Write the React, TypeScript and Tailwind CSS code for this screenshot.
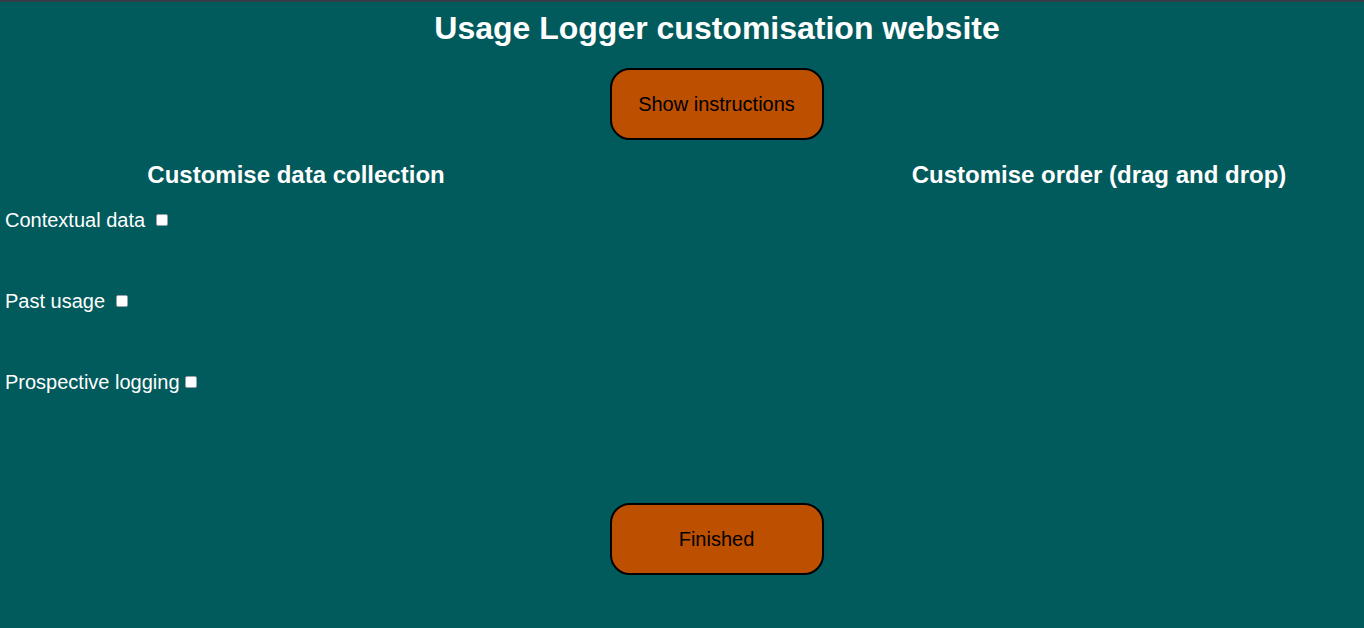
import React from "react";

const options = [
  { label: "Contextual data", gap: true },
  { label: "Past usage", gap: true },
  { label: "Prospective logging", gap: false },
];

function ActionButton({ children }: { children: React.ReactNode }) {
  return (
    <button className="flex h-[72px] w-[214px] items-center justify-center rounded-[20px] border-2 border-black bg-[#bd4f00] text-[20px] text-black">
      {children}
    </button>
  );
}

export default function App() {
  return (
    <div className="min-h-screen w-full border-t-2 border-[#363d48] bg-[#015a5c] font-['Liberation_Sans',Arial,sans-serif] text-white">
      {/* the centred bits sit a little right of the viewport centre */}
      <h1 className="pl-[70px] pt-[8px] text-center text-[32px] font-bold leading-[36px]">
        Usage Logger customisation website
      </h1>

      <div className="mt-[22px] flex justify-center pl-[69px]">
        <ActionButton>Show instructions</ActionButton>
      </div>

      <div className="mt-[21px] flex">
        <div className="w-[592px]">
          <h3 className="text-center text-[24px] font-bold leading-[28px]">
            Customise data collection
          </h3>
          <div className="mt-[19px] flex flex-col gap-[57px] pl-[5px]">
            {options.map((o) => (
              <label key={o.label} className="flex h-[24px] items-center text-[20px] leading-[24px]">
                <span>{o.label}</span>
                <span
                  className={
                    o.gap
                      ? "ml-[11px] h-[12px] w-[12px] rounded-[2px] border border-gray-400 bg-white"
                      : "ml-[5px] h-[12px] w-[12px] rounded-[2px] border border-gray-400 bg-white"
                  }
                />
              </label>
            ))}
          </div>
        </div>
        <div className="flex-1" />
        <div className="w-[530px]">
          <h3 className="text-center text-[24px] font-bold leading-[28px]">
            Customise order (drag and drop)
          </h3>
        </div>
      </div>

      <div className="mt-[109px] flex justify-center pb-[53px] pl-[69px]">
        <ActionButton>Finished</ActionButton>
      </div>
    </div>
  );
}
